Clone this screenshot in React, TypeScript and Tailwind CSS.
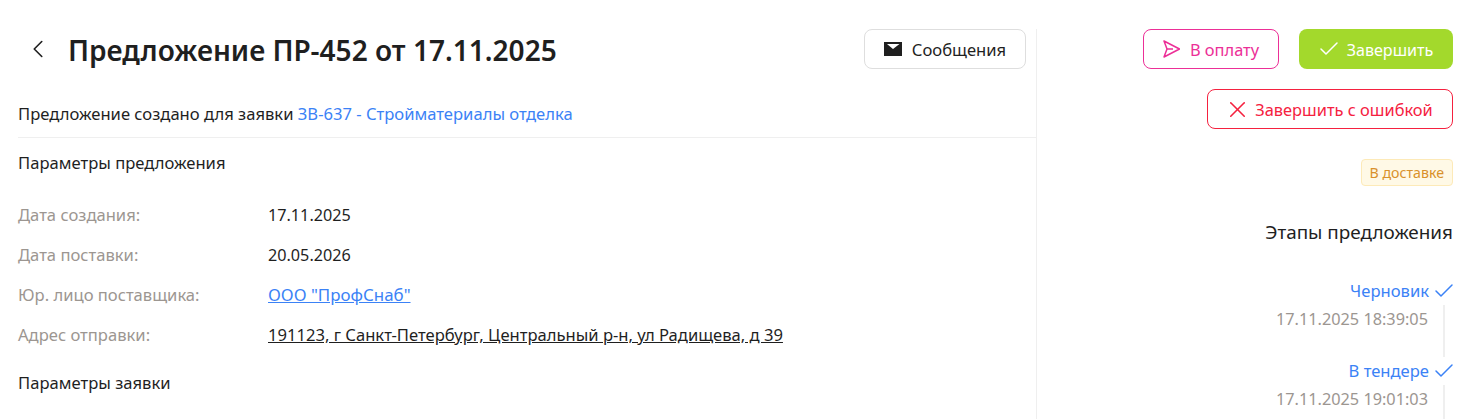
import React from 'react';
import { Check, ChevronLeft, X } from 'lucide-react';

const fieldRows = [
  { label: 'Дата создания:', value: '17.11.2025', valueClass: 'text-[16.2px]' },
  { label: 'Дата поставки:', value: '20.05.2026', valueClass: 'text-[16.2px]' },
  { label: 'Юр. лицо поставщика:', value: 'ООО "ПрофСнаб"', valueClass: 'text-[16.9px] text-[#3b82f6] underline' },
  { label: 'Адрес отправки:', value: '191123, г Санкт-Петербург, Центральный р-н, ул Радищева, д 39', valueClass: 'underline' },
];

const stages = [
  { name: 'Черновик', date: '17.11.2025 18:39:05', lineH: 'h-[52px]' },
  { name: 'В тендере', date: '17.11.2025 19:01:03', lineH: 'h-[34px]' },
];

const MailIcon = () => (
  <svg width="18" height="14" viewBox="0 0 18 14" className="shrink-0">
    <path d="M0 0H18V14H0Z M3 2 L9 7 L15.5 2 Z" fill="#1f1f1f" fillRule="evenodd" />
  </svg>
);

const PlaneIcon = () => (
  <svg width="17" height="18" viewBox="0 0 17 18" fill="none" stroke="currentColor" strokeWidth="1.5" strokeLinejoin="round" className="shrink-0">
    <path d="M1 1 L16.5 9 L1 17 L4 9 Z M4 9 H10" />
  </svg>
);

export default function App() {
  return (
    <div className="flex h-[419px] w-[1477px] overflow-hidden bg-white font-['Noto_Sans',sans-serif] text-[16.6px] text-[#1f1f1f]">
      <div className="w-[1036px] shrink-0 pl-[18px] pt-[29px]">
        <div className="flex h-[109px] flex-col border-b border-[#efefef]">
          <div className="flex h-10 items-center justify-between">
            <div className="flex items-center">
              <ChevronLeft size={30} strokeWidth={1.3} className="ml-[5px] shrink-0" />
              <h1 className="ml-[15px] pt-[2px] text-[28.05px] font-semibold leading-10">Предложение ПР-452 от 17.11.2025</h1>
            </div>
            <button className="mr-[10px] flex h-10 w-[162px] items-center justify-center gap-[10px] rounded-lg border border-[#dedede] bg-white">
              <MailIcon />
              <span className="pt-[2px]">Сообщения</span>
            </button>
          </div>
          <div className="mt-[33px] leading-[24px]">
            Предложение создано для заявки <span className="text-[#3b82f6]">ЗВ-637 - Стройматериалы отделка</span>
          </div>
        </div>
        <div className="mt-[13px] leading-[24px]">Параметры предложения</div>
        <div className="mt-[28px] flex flex-col gap-[16px]">
          {fieldRows.map((row) => (
            <div key={row.label} className="flex leading-[24px]">
              <div className="w-[250px] shrink-0 text-[#9c9691]">{row.label}</div>
              <div className={row.valueClass}>{row.value}</div>
            </div>
          ))}
        </div>
        <div className="mt-[24px] leading-[24px]">Параметры заявки</div>
      </div>
      <div className="mt-[29px] flex-1 border-l border-[#efefef] pr-[24px]">
        <div className="flex justify-end gap-[20px]">
          <button className="flex h-10 w-[136px] items-center justify-center gap-[10px] rounded-lg border border-[#ec2f97] text-[16.4px] text-[#ec2f97]">
            <PlaneIcon />
            <span className="pt-[2px]">В оплату</span>
          </button>
          <button className="flex h-10 w-[154px] items-center justify-center gap-[6px] rounded-lg bg-[#a3d92c] pr-[2px] text-[16.1px] text-white">
            <Check size={24} strokeWidth={1.5} className="shrink-0" />
            <span className="pt-[2px]">Завершить</span>
          </button>
        </div>
        <div className="mt-[20px] flex justify-end">
          <button className="flex h-10 w-[246px] items-center justify-center gap-[4px] rounded-lg border border-[#f5213f] pr-[3px] text-[16.4px] text-[#f5213f]">
            <X size={27} strokeWidth={1.4} className="shrink-0" />
            <span className="pt-[2px]">Завершить с ошибкой</span>
          </button>
        </div>
        <div className="mt-[30px] flex justify-end">
          <span className="flex h-[27px] items-center rounded border border-[#fdeab8] bg-[#fff9e6] px-[8px] text-[14.2px] text-[#d9912b]">В доставке</span>
        </div>
        <div className="mt-[33px] text-right text-[18.9px] leading-[26px]">Этапы предложения</div>
        <div className="mt-[34px] flex flex-col items-end gap-[2px]">
          {stages.map((stage) => (
            <div key={stage.name} className="flex flex-col items-end">
              <div className="-mr-[3px] flex items-center gap-[3px] leading-[24px] text-[#3b82f6]">
                <span>{stage.name}</span>
                <Check size={24} strokeWidth={1.5} className="shrink-0" />
              </div>
              <div className="mt-[2px] flex">
                <span className="mt-[2px] text-[16.3px] leading-[24px] text-[#9c9691]">{stage.date}</span>
                <div className={`ml-[15px] mr-[8px] w-[2px] bg-[#efefef] ${stage.lineH}`} />
              </div>
            </div>
          ))}
        </div>
      </div>
    </div>
  );
}
